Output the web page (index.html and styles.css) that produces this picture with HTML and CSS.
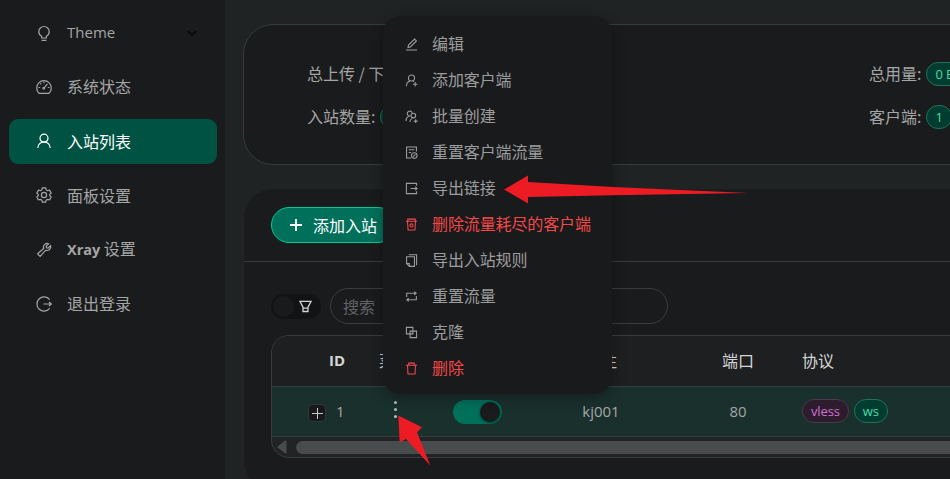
FILE: index.html
```html
<!DOCTYPE html>
<html lang="zh-CN">
<head>
<meta charset="utf-8">
<title>入站列表</title>
<link rel="stylesheet" href="styles.css">
</head>
<body>
<div class="app">
  <nav class="sidebar">
    <a class="nav-item"><svg class="icon" viewBox="0 0 16 16"><path d="M5.600 13V11.200C3.900 10.300 2.800 8.700 2.800 6.700a5.200 5.200 0 0 1 10.400 0c0 2-1.100 3.600-2.800 4.500V13zM5.600 15.300h4.800"/></svg><span class="latin">Theme</span><svg class="chevron" viewBox="0 0 10 8"><path d="M1 2l4 4 4-4"/></svg></a>
    <a class="nav-item"><svg class="icon" viewBox="0 0 16 16"><path d="M3 14.300a7.300 7.300 0 1 1 10 0zM8 2.800v1.500M4.300 4.300l1 1M2.600 8.500h1.600M11.800 8.500h1.600M7.800 9.300l3.600-4.500"/><circle cx="7.700" cy="9.300" r=".8"/></svg><span>系统状态</span></a>
    <a class="nav-item active"><svg class="icon" viewBox="0 0 16 16"><circle cx="8" cy="5.200" r="4"/><path d="M1.800 15a6.200 6.200 0 0 1 12.400 0"/></svg><span>入站列表</span></a>
    <a class="nav-item"><svg class="icon" viewBox="0 0 16 16"><path d="M6.400.9h3.200l.6 2 1.300.8 2.100-.5 1.600 2.800-1.500 1.500v1.200l1.500 1.500-1.600 2.700-2.100-.5-1.300.8-.6 2H6.400l-.6-2-1.300-.8-2.100.5L.8 10.200l1.500-1.500V7.500L.8 6l1.600-2.800 2.100.5 1.300-.8z"/><circle cx="8" cy="8" r="2.600"/></svg><span>面板设置</span></a>
    <a class="nav-item"><svg class="icon" viewBox="0 0 16 16"><path d="M12.700 1.700l-2.500 2.600.3 1.500 1.600.3 2.400-2.500c.9 2.800-1.500 5.600-4.900 4.700l-5.500 6-2.500-2.500 6.100-5.300C6.600 3.500 9.500.6 12.700 1.700z"/></svg><span><b class="latin">Xray</b> 设置</span></a>
    <a class="nav-item"><svg class="icon" viewBox="0 0 16 16"><path d="M13.600 3.600a7.100 7.100 0 1 0 0 8.800M7.500 8h7M13 6l2.300 2L13 10"/></svg><span>退出登录</span></a>
  </nav>

  <main class="content">
    <section class="card summary">
      <div class="stat">总上传 / 下载:</div>
      <div class="stat">总用量: <span class="tag green">0 B</span></div>
      <div class="stat">入站数量: <span class="tag green">1</span></div>
      <div class="stat">客户端: <span class="tag green">1</span></div>
    </section>

    <section class="card inbounds">
      <header class="card-head">
        <button class="add"><svg viewBox="0 0 12 12"><path d="M6 0v12M0 6h12"/></svg>添加入站</button>
      </header>
      <div class="filters">
        <span class="filter-switch"><i></i><svg viewBox="0 0 14 13"><path d="M1 1h12L9.700 7.200v4.700H4.300V7.200zM4.300 8.200h5.400"/></svg></span>
        <input class="search" placeholder="搜索">
      </div>
      <div class="table">
        <div class="tr head">
          <div class="id"><b class="latin">ID</b></div><div>菜单</div><div>启用</div><div>备注</div><div>端口</div><div class="protocol">协议</div>
        </div>
        <div class="tr row">
          <div class="id"><span class="expand"><svg viewBox="0 0 11 11"><path d="M5.500 0v11M0 5.500h11"/></svg></span><span class="latin">1</span></div>
          <div><span class="more"><i></i><i></i><i></i></span></div>
          <div><span class="switch"><i></i></span></div>
          <div class="latin">kj001</div>
          <div class="latin">80</div>
          <div class="protocol"><span class="tag purple">vless</span><span class="tag green">ws</span></div>
        </div>
        <div class="scroll"><svg viewBox="0 0 10 14"><path d="M8.500 1.500v11L1.500 7z"/></svg><span></span></div>
      </div>
    </section>
  </main>
</div>

<div class="menu">
  <a><svg viewBox="0 0 14 14"><path d="M1 13h12M3.200 10.300l.6-2.700L10.300 1.100l2 2-6.500 6.500z"/></svg><span>编辑</span></a>
  <a><svg viewBox="0 0 14 14"><circle cx="7" cy="4.300" r="3.300"/><path d="M1.500 13.300c0-3 1.700-5 4-5.700M8.500 7.600l1.200.6M8.500 11h5M11 8.500v5"/></svg><span>添加客户端</span></a>
  <a><svg viewBox="0 0 14 14"><path d="M5.500 6.600A2.700 2.700 0 1 1 7.700 3M1 11.800c0-2.500 1.200-4.300 3.200-5.200M5.300 13c0-2 .9-3.300 2.300-4M9.500 12h4M11.500 10v4"/><circle cx="9" cy="6" r="2.500"/></svg><span>批量创建</span></a>
  <a><svg viewBox="0 0 14 14"><path d="M12.300 6V1H1.700v12h4.800M4 4h6M4 7h2.500"/><circle cx="10" cy="10.300" r="3"/><path d="M8.700 11.500l2.600-2.400"/></svg><span>重置客户端流量</span></a>
  <a><svg viewBox="0 0 14 14"><path d="M12.500 4V1.500h-11v11h11V10M6 7h7M11 5l2 2-2 2"/></svg><span>导出链接</span></a>
  <a class="danger"><svg viewBox="0 0 14 14"><path d="M1 3.500h12M3 3.500V1.200h8v2.300M2.700 3.500l.6 9.500h7.400l.6-9.500"/><circle cx="7" cy="8" r="1.700"/></svg><span>删除流量耗尽的客户端</span></a>
  <a><svg viewBox="0 0 14 14"><path d="M4 .8h8.500V12M1.700 3h8.500v10.300H4.700l-3-3zM1.700 10.200h3v3"/></svg><span>导出入站规则</span></a>
  <a><svg viewBox="0 0 14 14"><path d="M1.800 7.500V3.500h10M10 1.700l2 1.800-2 1.800M12.200 6.500v4H2M4 8.700l-2 1.800 2 1.800"/></svg><span>重置流量</span></a>
  <a><svg viewBox="0 0 14 14"><path d="M1.500 1.500h7v7h-7zM5.500 5.500h7v7h-7z"/></svg><span>克隆</span></a>
  <a class="danger"><svg viewBox="0 0 14 14"><path d="M1 3.500h12M4 3.500V1.200h6v2.300M2.700 3.500l.5 9.500h7.600l.5-9.500"/></svg><span>删除</span></a>
</div>

<svg class="pointers" viewBox="0 0 950 479">
  <path d="M504 189.500L528 175.500V182L613 187L748 193L613 195.300L528 197V203.500Z"/>
  <path d="M398.300 415.500L422 427.300L417 432.300L430.300 465.500L406 439L399.700 442.500Z"/>
</svg>
</body>
</html>
```

FILE: styles.css
```css
* { box-sizing: border-box; }
body {
  margin: 0;
  width: 950px;
  height: 479px;
  overflow: hidden;
  background: #1f2324;
  color: #a5a6a6;
  font: 16px/24px "Noto Sans CJK SC", sans-serif;
}
svg { fill: none; stroke: currentColor; flex: none; }
.latin { font-family: "Open Sans", sans-serif; font-size: 15px; }
.app { display: flex; height: 479px; }

.sidebar {
  flex: none;
  width: 225px;
  padding: 10px 8px 0 9px;
  display: flex;
  flex-direction: column;
  gap: 9.300px;
  background: #1a1b1d;
}
.nav-item {
  display: flex;
  align-items: center;
  flex: none;
  height: 45px;
  padding: 0 20px 0 27px;
  border-radius: 9px;
}
.nav-item span { padding-bottom: 1px; }
.nav-item b { font-size: 14.500px; }
.nav-item.active { background: #005343; color: #fff; }
.icon { width: 16px; height: 16px; margin-right: 15px; stroke-width: 1.200; }
.chevron { width: 10px; height: 8px; margin-left: auto; stroke: #08090a; stroke-width: 1.700; }

.content {
  flex: 1;
  min-width: 0;
  overflow: hidden;
  padding: 24px 0 0 18px;
  display: flex;
  flex-direction: column;
  gap: 23px;
}
.card { flex: none; background: #1a1b1d; border: 1px solid #373b3d; border-radius: 30px; }
.summary {
  height: 141px;
  width: 740px;
  padding: 26px 0 0 63px;
  display: grid;
  grid-template-columns: 562px 1fr;
  grid-template-rows: 43px 43px;
}
.stat { display: flex; align-items: center; gap: 5px; white-space: nowrap; }
.stat .tag { margin-top: 2px; }
.tag {
  height: 24px;
  padding: 0 8px;
  border: 1px solid #246f56;
  border-radius: 12px;
  font: 13px/23px "Open Sans", sans-serif;
  letter-spacing: -0.150px;
}
.green { background: #003d30; color: #4bdba8; border-color: #20735b; }
.purple { background: #2d1c2e; color: #cf73ce; border-color: #4b394c; }

.inbounds { width: 740px; height: 303px; border-color: #222426; }
.card-head { height: 73px; padding: 18px 27px; border-bottom: 1px solid #373a3c; }
.add {
  display: flex;
  align-items: center;
  gap: 11px;
  height: 36px;
  padding: 0 18px 1px;
  border: 1px solid #00c99c;
  border-radius: 18px;
  background: #00705b;
  color: #fff;
  font: 16px/24px "Noto Sans CJK SC", sans-serif;
}
.add svg { width: 12px; height: 12px; stroke-width: 1.800; margin-top: 1px; }
.filters { display: flex; align-items: center; gap: 9px; padding: 26px 27px 0; }
.filter-switch {
  display: flex;
  align-items: center;
  justify-content: space-between;
  width: 50px;
  height: 25px;
  padding: 0 9px 0 2px;
  border-radius: 13px;
  background: #121315;
}
.filter-switch i { width: 21px; height: 21px; border-radius: 50%; background: #191a1c; }
.filter-switch svg { width: 13px; height: 13px; stroke: #d4d4d4; stroke-width: 1.400; }
.search {
  width: 338px;
  height: 36px;
  padding: 0 12px 1px;
  border: 1px solid #3a3c3e;
  border-radius: 18px;
  background: transparent;
  font: 16px "Noto Sans CJK SC", sans-serif;
}
.search::placeholder { color: #626364; }

.table {
  height: 123px;
  margin: 11px 0 0 27px;
  border: 1px solid #3a3d3f;
  border-radius: 18px;
  overflow: hidden;
  background: #202425;
}
.tr {
  display: grid;
  grid-template-columns: 90px 66px 99px 148px 126px 1fr;
  height: 51px;
  border-bottom: 1px solid #373c3e;
}
.tr > div { display: flex; align-items: center; justify-content: center; padding-bottom: 1px; }
.tr > .id { justify-content: flex-start; }
.tr > .protocol { justify-content: flex-start; padding-left: 1px; gap: 5px; }
.head { background: #1e1f21; color: #d5d5d5; }
.head > div { padding-bottom: 3px; }
.head .id { padding-left: 57px; }
.row { height: 50px; background: #1a302d; }
.row .id { padding-left: 36px; gap: 10px; }
.expand {
  display: grid;
  place-items: center;
  width: 18px;
  height: 18px;
  margin-top: 4px;
  border: 1px solid #333638;
  border-radius: 5px;
  background: #17191a;
  color: #c9cccc;
}
.expand svg { width: 11px; height: 11px; }
.more { display: grid; gap: 4px; margin-top: -4px; }
.more i { width: 3px; height: 3px; border-radius: 50%; background: #b5baba; }
.switch {
  display: flex;
  align-items: center;
  justify-content: flex-end;
  width: 49px;
  height: 24px;
  margin-top: 1px;
  padding-right: 2px;
  border-radius: 12px;
  background: #00705b;
}
.switch i { width: 20px; height: 20px; border-radius: 50%; background: #1a1b1d; box-shadow: 0 1px 3px #00352b; }
.scroll { display: flex; align-items: center; gap: 9px; height: 20px; padding-left: 5px; color: #484c4d; }
.scroll svg { width: 10px; height: 14px; fill: currentColor; stroke-width: 2; stroke-linejoin: round; }
.scroll span { flex: 1; height: 13px; border-radius: 7px; background: #484c4d; }

/* Context menu opened from the row's action button */
.menu {
  position: absolute;
  left: 383px;
  top: 16px;
  width: 229px;
  height: 378px;
  padding: 10px 0;
  border-radius: 18px;
  background: #191a1c;
  box-shadow: 0 4px 14px #0005;
  color: #9c9d9d;
  letter-spacing: -0.120px;
}
.menu a { display: flex; align-items: center; gap: 14px; height: 36px; padding-left: 22px; }
.menu span { padding-bottom: 3px; }
.menu svg { width: 13px; height: 13px; stroke-width: 1.150; }
.menu .danger { color: #f5484a; }
.pointers { position: absolute; left: 0; top: 0; width: 950px; height: 479px; fill: #ed1c24; stroke: none; pointer-events: none; }
```
